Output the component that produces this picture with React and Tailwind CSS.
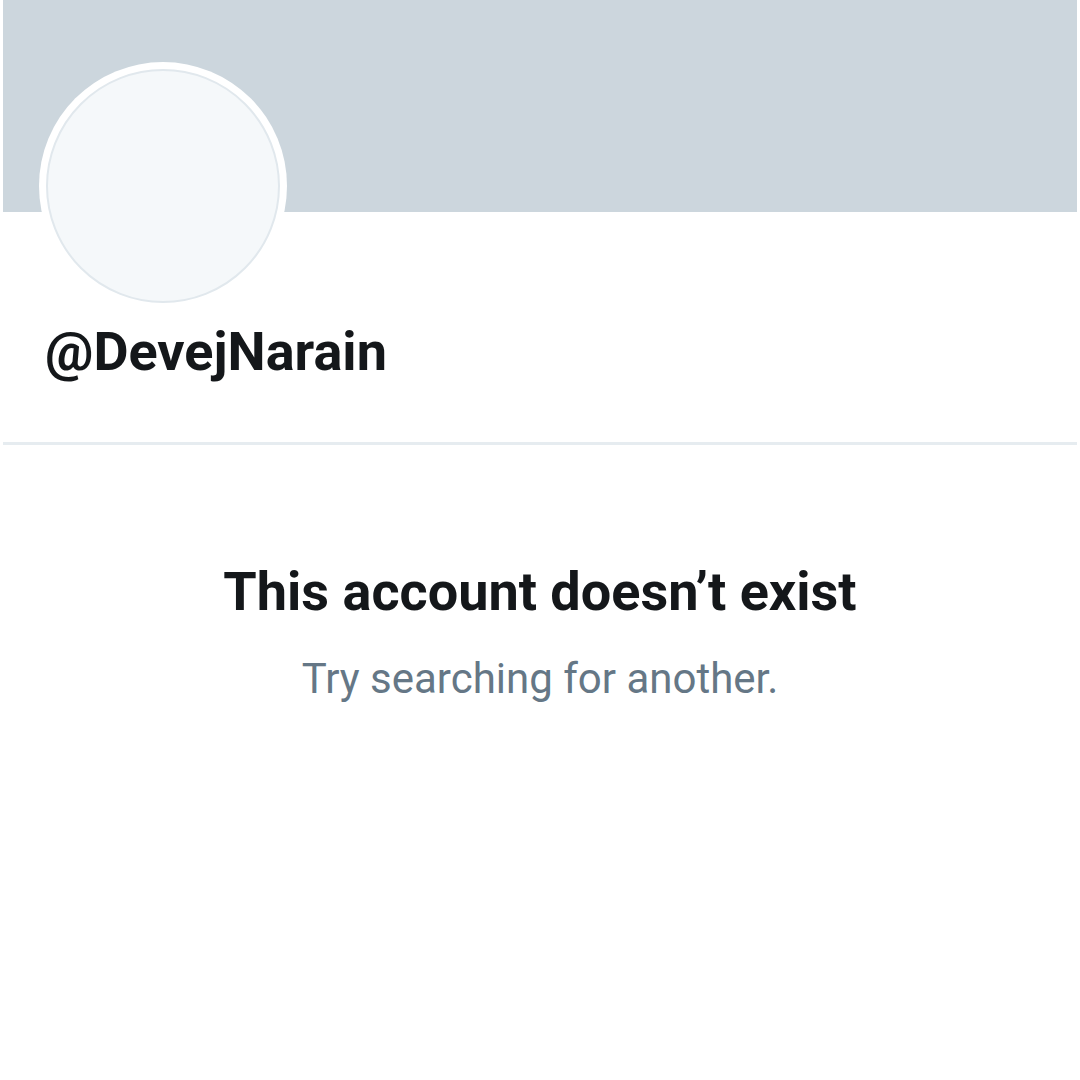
import React from 'react';

const App = () => {
  return (
    <div className="w-[1080px] h-[1080px] bg-white px-[3px] font-['Roboto',sans-serif] overflow-hidden">
      {/* Banner */}
      <div className="h-[212px] bg-[#ccd6dd]" />

      {/* Avatar + handle */}
      <div className="relative h-[230px]">
        <div className="absolute left-[36px] top-[-150px] w-[248px] h-[248px] rounded-full bg-white flex items-center justify-center">
          <div className="w-[234px] h-[234px] rounded-full bg-[#f5f8fa] border-2 border-[#e1e8ed]" />
        </div>
        <div className="pt-[110px] pl-[42px]">
          <h1 className="text-[54px] leading-[60px] font-bold text-[#14171a]">@DevejNarain</h1>
        </div>
      </div>

      <div className="h-[3px] bg-[#e6ecf0]" />

      {/* Empty state */}
      <div className="flex flex-col items-center pt-[114px]">
        <h2 className="text-[54px] leading-[66px] font-bold text-[#14171a]">This account doesn’t exist</h2>
        <p className="mt-[29px] text-[42px] leading-[50px] text-[#657786]">Try searching for another.</p>
      </div>
    </div>
  );
};

export default App;
